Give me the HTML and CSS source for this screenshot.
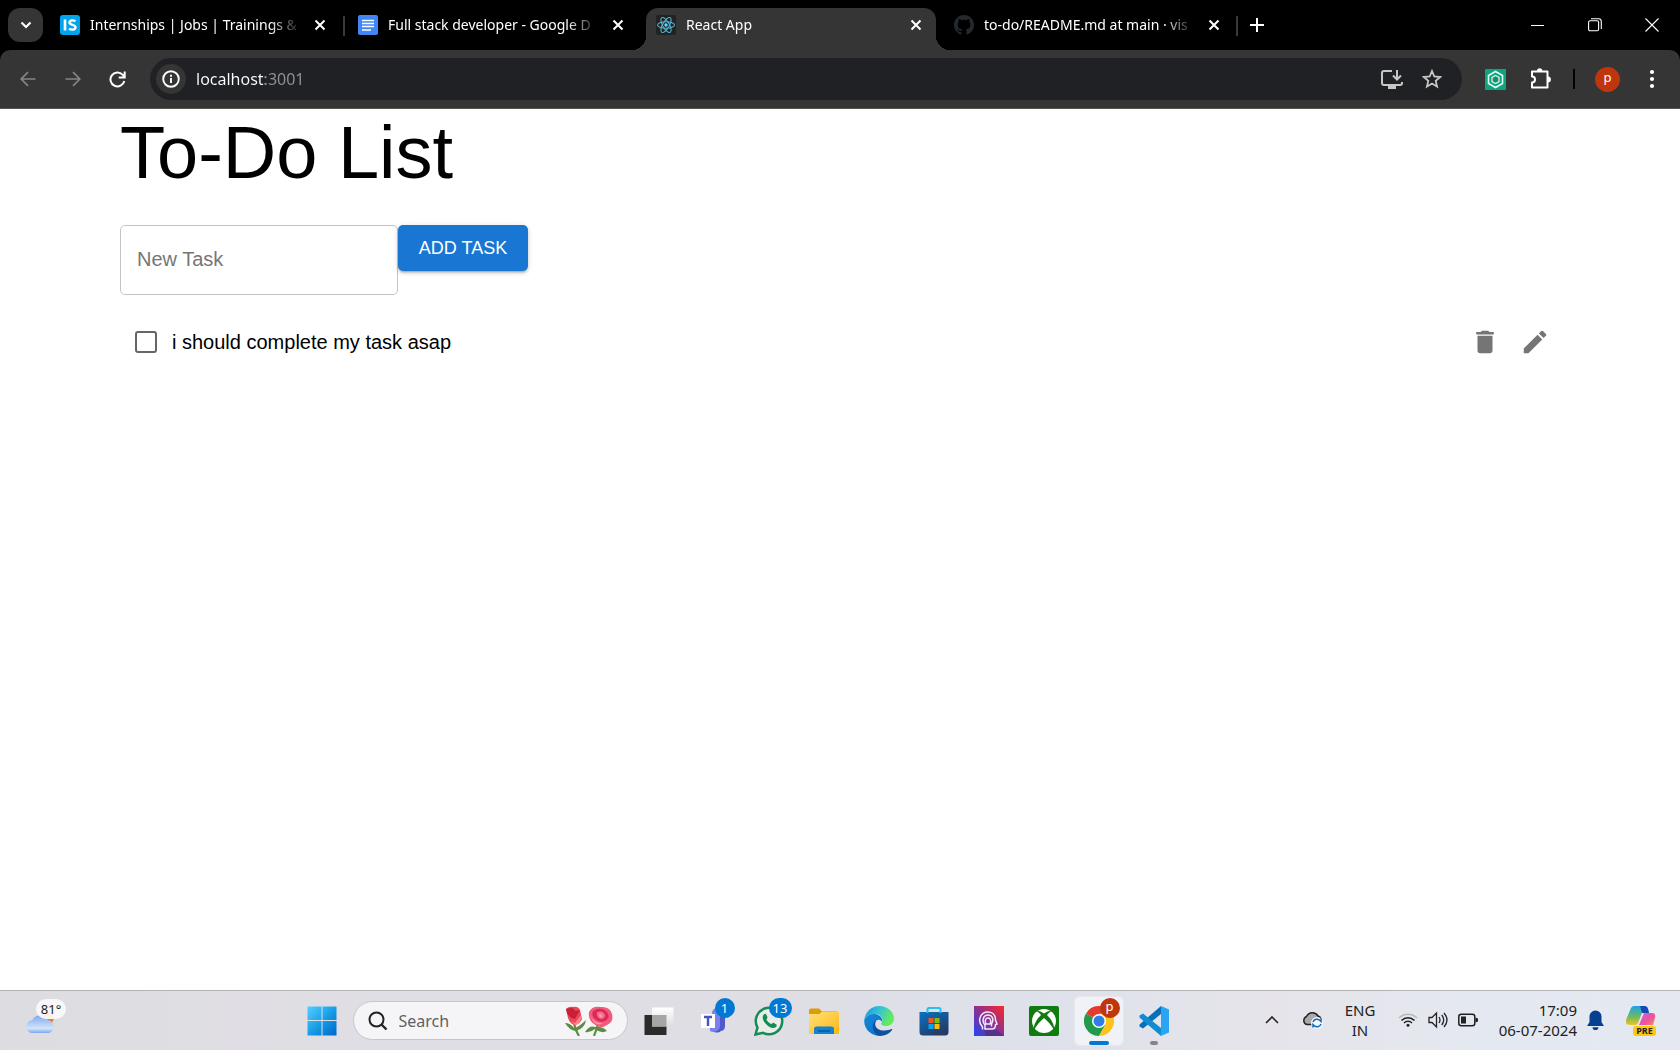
FILE: index.html
```html
<!DOCTYPE html>
<html lang="en">
<head>
<meta charset="utf-8">
<meta name="viewport" content="width=device-width, initial-scale=1">
<title>React App</title>
<link rel="stylesheet" href="styles.css">
</head>
<body>
<header class="browser">
  <div class="tabstrip">
    <button class="tab-search" aria-label="Search tabs"><svg width="12" height="8" viewBox="0 0 12 8"><path d="M1.5 1.5 6 6l4.500-4.500" fill="none" stroke="#fff" stroke-width="2.200"/></svg></button>
    <div class="tabs">
      <div class="tab">
        <svg width="20" height="20" viewBox="0 0 20 20"><rect width="20" height="20" rx="3" fill="#00a5ec"/><path d="M5 4.500v11" stroke="#fff" stroke-width="2.600"/><path d="M15.500 6.200c-2.500-1.500-6-.9-6 1.400 0 3 6 1.700 6 4.700 0 2.600-4 3-6.500 1.400" fill="none" stroke="#fff" stroke-width="2.400"/></svg>
        <span class="tab-title">Internships | Jobs | Trainings &amp; F</span>
        <button class="tab-close" aria-label="Close tab"><svg width="12" height="12" viewBox="0 0 12 12"><path d="m1.500 1.500 9 9m0-9-9 9" stroke="#fff" stroke-width="2"/></svg></button>
      </div>
      <div class="tab divided">
        <svg width="20" height="20" viewBox="0 0 20 20"><rect width="20" height="20" rx="2" fill="#4285f4"/><path d="M4 5.500h12M4 8.500h12M4 11.500h12M4 15h9" stroke="#fff" stroke-width="1.700"/></svg>
        <span class="tab-title">Full stack developer - Google D</span>
        <button class="tab-close" aria-label="Close tab"><svg width="12" height="12" viewBox="0 0 12 12"><path d="m1.500 1.500 9 9m0-9-9 9" stroke="#fff" stroke-width="2"/></svg></button>
      </div>
      <div class="tab active">
        <svg width="20" height="20" viewBox="0 0 20 20"><rect width="20" height="20" rx="2" fill="#222"/><g fill="none" stroke="#53b5d0" stroke-width="1.100"><ellipse cx="10" cy="10" rx="8.500" ry="3.300"/><ellipse cx="10" cy="10" rx="8.500" ry="3.300" transform="rotate(60 10 10)"/><ellipse cx="10" cy="10" rx="8.500" ry="3.300" transform="rotate(120 10 10)"/></g><circle cx="10" cy="10" r="1.700" fill="#61dafb"/></svg>
        <span class="tab-title">React App</span>
        <button class="tab-close" aria-label="Close tab"><svg width="12" height="12" viewBox="0 0 12 12"><path d="m1.500 1.500 9 9m0-9-9 9" stroke="#fff" stroke-width="2"/></svg></button>
      </div>
      <div class="tab">
        <svg width="20" height="20" viewBox="0 0 16 16"><path fill="#24292f" d="M8 0C3.580 0 0 3.580 0 8c0 3.540 2.290 6.530 5.470 7.590.4.070.55-.17.55-.38 0-.19-.01-.82-.01-1.490-2.010.37-2.530-.49-2.690-.94-.09-.23-.48-.94-.82-1.130-.28-.15-.68-.52-.01-.53.63-.01 1.080.58 1.230.82.720 1.210 1.870.87 2.330.66.070-.52.28-.87.510-1.070-1.780-.2-3.640-.89-3.640-3.950 0-.87.310-1.590.82-2.150-.08-.2-.36-1.020.08-2.120 0 0 .67-.21 2.200.82a7.600 7.600 0 0 1 4 0c1.530-1.040 2.200-.82 2.200-.82.440 1.100.16 1.920.08 2.120.51.560.82 1.270.82 2.150 0 3.070-1.870 3.750-3.650 3.950.29.250.54.730.54 1.480 0 1.070-.01 1.930-.01 2.200 0 .21.15.460.55.380A8 8 0 0 0 8 0"/></svg>
        <span class="tab-title">to-do/README.md at main · vis</span>
        <button class="tab-close" aria-label="Close tab"><svg width="12" height="12" viewBox="0 0 12 12"><path d="m1.500 1.500 9 9m0-9-9 9" stroke="#fff" stroke-width="2"/></svg></button>
      </div>
      <button class="new-tab" aria-label="New tab"><svg width="14" height="14" viewBox="0 0 14 14"><path d="M7 0v14M0 7h14" stroke="#fff" stroke-width="2"/></svg></button>
    </div>
    <div class="window-controls">
      <button aria-label="Minimize"><svg width="14" height="14" viewBox="0 0 14 14"><path d="M0 7.500h13" stroke="#fff"/></svg></button>
      <button aria-label="Restore"><svg width="14" height="14" viewBox="0 0 14 14" fill="none" stroke="#fff" stroke-width="1.100"><rect x=".6" y="2.800" width="10" height="10" rx="1.500"/><path d="M3 .7h7.500a2.800 2.800 0 0 1 2.800 2.800V11"/></svg></button>
      <button aria-label="Close"><svg width="14" height="14" viewBox="0 0 14 14"><path d="m.5.5 13 13m0-13-13 13" stroke="#fff" stroke-width="1.100"/></svg></button>
    </div>
  </div>
  <div class="toolbar">
    <nav class="history">
      <button aria-label="Back"><svg width="16" height="16" viewBox="0 0 16 16" fill="none" stroke="#848484" stroke-width="1.700"><path d="M15.500 8H1.500M8 1.200 1.200 8 8 14.800"/></svg></button>
      <button aria-label="Forward"><svg width="16" height="16" viewBox="0 0 16 16" fill="none" stroke="#848484" stroke-width="1.700"><path d="M.5 8h14M8 1.200 14.800 8 8 14.800"/></svg></button>
      <button aria-label="Reload"><svg width="17" height="17" viewBox="0 0 17 17" fill="none" stroke="#fff" stroke-width="2"><path d="M15.300 10A7 7 0 1 1 13.600 3.600L15.500 6M15.700.5V6.500H9.700"/></svg></button>
    </nav>
    <div class="omnibox">
      <button class="site-info" aria-label="View site information"><svg width="18" height="18" viewBox="0 0 18 18"><circle cx="9" cy="9" r="7.800" fill="none" stroke="#fff" stroke-width="1.900"/><path d="M9 8v5M9 4.700v2" stroke="#fff" stroke-width="1.900"/></svg></button>
      <input class="address" type="text" value="localhost:3001" aria-label="Address bar">
      <button class="omni-action" aria-label="Install app"><svg width="22" height="20" viewBox="0 0 22 20" fill="none" stroke="#c7c7c7" stroke-width="2"><path d="M11 2H3a2 2 0 0 0-2 2v10a2 2 0 0 0 2 2h16a2 2 0 0 0 2-2v-1M16 1v9M12 6.500l4 4 4-4"/><path d="M7 17h8v3H7z" fill="#c7c7c7" stroke="none"/></svg></button>
      <button class="omni-action" aria-label="Bookmark this tab"><svg width="20" height="20" viewBox="0 0 20 20"><path d="m10 2 2.300 5.500 5.900.5-4.500 3.900 1.400 5.800L10 14.600l-5.100 3.100 1.400-5.800L1.800 8l5.900-.5z" fill="none" stroke="#c7c7c7" stroke-width="1.800"/></svg></button>
    </div>
    <div class="extensions">
      <button aria-label="Extension"><svg width="21" height="21" viewBox="0 0 21 21"><rect width="21" height="21" rx="1" fill="#10a37f"/><path d="m10.500 2.500 7 4v8l-7 4-7-4v-8z" fill="none" stroke="#e6fff7" stroke-width="1.600"/><path d="m10.500 6.500 3.500 2v4l-3.500 2-3.500-2v-4z" fill="#188b70" stroke="#d4f5eb" stroke-width="1.300"/></svg></button>
      <button aria-label="Extensions"><svg width="22" height="22" viewBox="0 0 22 22"><path d="M2 3.500h15.500v16H2v-5a3 3 0 0 0 0-6z" fill="none" stroke="#fff" stroke-width="2" stroke-linejoin="round"/><path d="M7 3a2.700 2.700 0 0 1 5.400 0zM18 8.500a2.900 2.900 0 0 1 0 5.800z" fill="#fff"/></svg></button>
      <span class="rule"></span>
      <button class="avatar" aria-label="Profile">p</button>
      <button aria-label="Menu"><svg width="6" height="20" viewBox="0 0 6 20" fill="#fff"><circle cx="3" cy="3" r="2.100"/><circle cx="3" cy="10" r="2.100"/><circle cx="3" cy="17" r="2.100"/></svg></button>
    </div>
  </div>
</header>

<main class="page">
  <h1 class="title">To-Do List</h1>
  <form class="task-form">
    <input class="task-input" type="text" placeholder="New Task" aria-label="New Task">
    <button class="add-button" type="button">ADD TASK</button>
  </form>
  <ul class="task-list">
    <li class="task">
      <input class="task-check" type="checkbox" id="task-1">
      <label class="task-label" for="task-1">i should complete my task asap</label>
      <button class="icon-button" aria-label="Delete"><svg width="30" height="30" viewBox="0 0 24 24"><path fill="#757575" d="M6 19c0 1.100.9 2 2 2h8c1.100 0 2-.9 2-2V7H6zM19 4h-3.500l-1-1h-5l-1 1H5v2h14z"/></svg></button>
      <button class="icon-button" aria-label="Edit"><svg width="30" height="30" viewBox="0 0 24 24"><path fill="#757575" d="M3 17.250V21h3.750L17.810 9.940l-3.750-3.750zM20.710 7.040a1 1 0 0 0 0-1.410l-2.340-2.340a1 1 0 0 0-1.410 0l-1.830 1.830 3.750 3.750z"/></svg></button>
    </li>
  </ul>
</main>

<footer class="taskbar">
  <div class="widgets">
    <button class="weather" aria-label="Weather">
      <svg width="30" height="22" viewBox="0 0 30 22"><defs><linearGradient id="cloud" x2="0" y2="1"><stop stop-color="#7ea9ef"/><stop offset=".75" stop-color="#d3e5fa"/><stop offset="1" stop-color="#78a5ee"/></linearGradient></defs><circle cx="22" cy="6" r="6" fill="#f27a25"/><path d="M7 21a6.500 6.500 0 0 1-.8-13A9 9 0 0 1 22 8a6.700 6.700 0 0 1 1 13z" fill="url(#cloud)"/></svg>
      <span class="temperature">81°</span>
    </button>
  </div>
  <div class="apps">
    <button class="app" aria-label="Start"><svg width="30" height="30" viewBox="0 0 30 30"><defs><linearGradient id="win" x2="1" y2="1"><stop stop-color="#53d0ff"/><stop offset=".55" stop-color="#1499e4"/><stop offset="1" stop-color="#0067c8"/></linearGradient></defs><path d="M1 .5h13.500V14H.5V1zM15.500.5h14V14h-14zM.5 15h14v14.500H.5zM15.500 15h14v14.500h-14z" fill="url(#win)"/></svg></button>
    <div class="search">
      <svg width="20" height="20" viewBox="0 0 20 20"><circle cx="8.500" cy="8.500" r="7" fill="none" stroke="#222" stroke-width="2"/><path d="m13.500 13.500 5 5" stroke="#222" stroke-width="2.400"/></svg>
      <input type="text" placeholder="Search" aria-label="Search">
      <svg width="50" height="30" viewBox="0 0 50 30"><path d="M10 17q1 7 5 13M34 18q-2 7-4 12" stroke="#5b9140" stroke-width="2.200" fill="none"/><path d="M1 17q5 0 9 5 5-1 12-8-1 8-10 11-7-1-11-8M21 26q5-7 10-5 7-1 12 4-6 3-12-2-5 4-10 3" fill="#5d8c47"/><path d="M2 3q3-3 7-2 5-1 7 3l2 9q-2 5-7 6-5-1-7-7z" fill="#ed4659"/><path d="M2 3q8-3 9 2l5-1-5 9q-6-1-8-6z" fill="#c91f3b"/><path d="m7 14 4 3 6-8q1 8-6 10z" fill="#ff8489"/><path d="M25 6q3-6 11-5 10-1 12 7 2 8-5 11-7 5-13-1-6-4-5-12" fill="#f15b7b"/><path d="M29 5q8-5 14 1 4 6-2 9-6 2-10-2-4-3-2-8" fill="#df2857"/><path d="M33 6q6-2 8 3 0 4-4 4-5-1-4-7" fill="#f4708c"/><path d="M35 8q4 0 3 3-3 1-3-3M26 9q4 9 13 8-8 5-13-8" fill="#ff9dac"/></svg>
    </div>
    <button class="app" aria-label="Task view"><svg width="30" height="30" viewBox="0 0 30 30"><defs><linearGradient id="pane" x2="0" y2="1"><stop stop-color="#fff"/><stop offset="1" stop-color="#ddd"/></linearGradient></defs><path d="M.5 9h22v20H.5z" fill="#2b2b2b"/><path d="M8 1.500h21.500v19H8z" fill="url(#pane)"/><path d="M8 9h14.500v11.500H8z" fill="#a6a6a6"/></svg></button>
    <button class="app" aria-label="Teams"><svg width="30" height="30" viewBox="0 0 30 30"><circle cx="18" cy="7" r="5" fill="#7b83eb"/><path d="M13 10h13v10a5 5 0 0 1-4 5 7 7 0 0 1-11-3z" fill="#5059c9"/><path d="M10 10h11v11a7 7 0 0 1-10 4z" fill="#7b83eb"/><rect x="2" y="8" width="14" height="14" fill="#fff"/><path d="M5 11h8M9 11v9" stroke="#4b53bc" stroke-width="2.400"/></svg><span class="badge">1</span></button>
    <button class="app" aria-label="WhatsApp"><svg width="30" height="30" viewBox="0 0 30 30"><path d="M1.500 28.500 3.500 21.500A13.200 13.200 0 1 1 9 26.800z" fill="#e8edea" stroke="#168c54" stroke-width="2.500"/><path d="M10.500 8c-3 2-2 6 1 9.500s7.500 6 10.500 3.500c1-1 1-2 0-2.700l-2.500-1.500c-1-.5-1.500 1.500-2.500 1.200-2-1-4-3-4.500-4.500 0-1 1.400-1.300 1-2.300L12.300 8.500c-.3-.8-1-.9-1.800-.5" fill="#168c54"/></svg><span class="badge wide">13</span></button>
    <button class="app" aria-label="File Explorer"><svg width="30" height="30" viewBox="0 0 30 30"><defs><linearGradient id="folder" x2="1" y2="1"><stop stop-color="#ffe07a"/><stop offset="1" stop-color="#fdb813"/></linearGradient></defs><path d="M0 4.500A2 2 0 0 1 2 2.500h8l3 3H28v8H0z" fill="#dc9c08"/><path d="M0 8h10l3-2h17v22H0z" fill="url(#folder)"/><path d="M5 28v-5a2.500 2.500 0 0 1 2.500-2.500h15A2.500 2.500 0 0 1 25 23v5z" fill="#1482d3"/><path d="M9 25h12" stroke="#064d88" stroke-width="1.200"/></svg></button>
    <button class="app" aria-label="Edge"><svg width="30" height="30" viewBox="0 0 30 30"><defs><linearGradient id="edge-top" x2="1" y2=".4"><stop stop-color="#1b8dde"/><stop offset=".5" stop-color="#33c3d8"/><stop offset="1" stop-color="#65eb5a"/></linearGradient><linearGradient id="edge-low" x2=".7" y2="1"><stop stop-color="#1689d8"/><stop offset="1" stop-color="#0873ca"/></linearGradient></defs><path d="M.3 13A15 15 0 0 1 15 0c9 0 15 6 15 12.500 0 5-4 7.500-8 7.500-4.500 0-5.500-2-4.300-3.500C20 13 17 8 11 8 6 8 1.500 10.500.3 13" fill="url(#edge-top)"/><path d="M.2 14C2 9.500 7 7.500 11 8c5 .5 8 4.500 7 7.500-4-4-8 0-8 4 0 5 4 9 8 10A15 15 0 0 1 .2 14" fill="url(#edge-low)"/><path d="M12.500 14C9 20 13 24 19 24.500c4 .3 7-1 8.500-1.500 1 0 .8.700.4 1.300C25 28 21 30 16 30 9 28 6 18 12.500 14" fill="#10519e"/></svg></button>
    <button class="app" aria-label="Microsoft Store"><svg width="30" height="30" viewBox="0 0 30 30"><defs><linearGradient id="store" x2=".6" y2="1"><stop stop-color="#0872c4"/><stop offset="1" stop-color="#253b64"/></linearGradient></defs><path d="M.5 6h29v20a3.500 3.500 0 0 1-3.500 3.500H4A3.500 3.500 0 0 1 .5 26z" fill="url(#store)"/><path d="M8.500 7V3.500a1.500 1.500 0 0 1 1.500-1.500h10a1.500 1.500 0 0 1 1.500 1.500V7" fill="none" stroke="#2cbdef" stroke-width="2"/><path d="M9.500 12h5v5h-5z" fill="#f35325"/><path d="M15.500 12h5v5h-5z" fill="#81bc06"/><path d="M9.500 18h5v5h-5z" fill="#05a6f0"/><path d="M15.500 18h5v5h-5z" fill="#ffba08"/></svg></button>
    <button class="app" aria-label="Mind app"><svg width="30" height="30" viewBox="0 0 30 30"><defs><linearGradient id="mind" y1="1" x2="1" y2="0"><stop stop-color="#2146f5"/><stop offset=".5" stop-color="#8c318f"/><stop offset="1" stop-color="#ff2626"/></linearGradient></defs><path d="M0 0h30v30H0z" fill="url(#mind)"/><path d="m10 24 13 0 7 6H12z" fill="#533287"/><path d="M8.500 23.500v-2.500C3 15 6 6 14 6c5 0 7.500 3.500 7.500 8l1.500 4-1.500.5c0 3.500-1 4.500-3.500 4.500h-7v-4C7.500 15.500 9 9 14 9c5 0 6 5.500 3.500 9v2.500M12 18c-1.500-3-.5-6 2-6s3.500 3 2 6z" fill="none" stroke="#f2e8ff" stroke-width="1.500"/></svg></button>
    <button class="app" aria-label="Xbox"><svg width="30" height="30" viewBox="0 0 30 30"><rect width="30" height="30" rx="2" fill="#107c10"/><circle cx="15" cy="15" r="12" fill="#fff"/><path d="M6 5c3-1 6 .5 9 2.500 3-2 6-3.500 9-2.500-2 0-4 1.500-6 4 4 4 8 10 7 15-2-4-6-8.500-10-12-4 3.500-8 8-10 12-1-5 3-11 7-15-2-2.500-4-4-6-4" fill="#107c10"/></svg></button>
    <button class="app current" aria-label="Chrome"><svg width="30" height="30" viewBox="0 0 30 30"><path d="M15 15 2 7.500a15 15 0 0 1 26 0z" fill="#e33b2e"/><path d="M15 15 2 7.500A15 15 0 0 0 15 30l6.500-11.500z" fill="#229a4b"/><path d="M15 30A15 15 0 0 0 28 7.500H15l6.500 11z" fill="#fcc31b"/><circle cx="15" cy="15" r="7" fill="#fff"/><circle cx="15" cy="15" r="5.500" fill="#2f7de9"/></svg><span class="badge profile">p</span></button>
    <button class="app open" aria-label="Visual Studio Code"><svg width="30" height="30" viewBox="0 0 30 30"><path d="m22 0 8 3.500v23L22 30z" fill="#2aa5f2"/><path d="M22 0v8L4 22.500.5 20.500v-2z" fill="#0870b8"/><path d="M22 30v-8L4 7.500.5 9.500v2z" fill="#118bd4"/></svg></button>
  </div>
  <div class="tray">
    <button aria-label="Show hidden icons"><svg width="14" height="8" viewBox="0 0 14 8"><path d="m1 7 6-6 6 6" fill="none" stroke="#222" stroke-width="1.600"/></svg></button>
    <button class="onedrive" aria-label="OneDrive"><svg width="21" height="19" viewBox="0 0 21 19"><path d="M5 14.500a4.200 4.200 0 0 1-.5-8A6.500 6.500 0 0 1 16 6a4.500 4.500 0 0 1 0 8.500z" fill="#aaa" stroke="#222" stroke-width="1.500"/><circle cx="15" cy="13" r="6" fill="#f5f8fd"/><path d="M11 12a4.200 4.200 0 0 1 7-1.500l1 1V8.500M19 14a4.200 4.200 0 0 1-7 1.500l-1-1v3" fill="none" stroke="#0b6cbe" stroke-width="1.500"/></svg></button>
    <button class="language">ENG<br>IN</button>
    <button class="status" aria-label="Network, volume and battery">
      <svg width="20" height="16" viewBox="0 0 20 16" fill="none" stroke="#222" stroke-width="1.500"><path d="M1 6a12.500 12.500 0 0 1 18 0" stroke="#b7b9be"/><path d="M3.500 8.500a9 9 0 0 1 13 0M6 11a5.600 5.600 0 0 1 8 0"/><circle cx="10" cy="13.300" r="1.500" fill="#222" stroke="none"/></svg>
      <svg width="20" height="18" viewBox="0 0 20 18" fill="none" stroke="#222" stroke-width="1.300"><path d="M1 6.500h3L8.500 2v14L4 11.500H1zM11 6q2 3 0 6M13.700 4q4 5 0 10M16 2q6 7 0 14"/></svg>
      <svg width="20" height="14" viewBox="0 0 20 14"><rect x=".8" y="1.300" width="16" height="11.400" rx="2.500" fill="none" stroke="#222" stroke-width="1.500"/><path d="M3 3.500h5v7H3zM17.500 4.500l2.500 1v3l-2.500 1z" fill="#222"/></svg>
    </button>
    <button class="clock"><span>17:09</span><span>06-07-2024</span></button>
    <button class="bell" aria-label="Notifications"><svg width="17" height="20" viewBox="0 0 17 20"><path d="M8.500.5A6 6 0 0 1 14.500 7v5l2.200 3.500v.5H.3v-.5L2.500 12V7a6 6 0 0 1 6-6.500M5.500 17.200h6a3 3 0 0 1-6 0" fill="#073f91"/></svg></button>
    <button class="copilot" aria-label="Copilot"><svg width="30" height="30" viewBox="0 0 30 30"><defs><linearGradient id="cop-left" x2="0" y2="1"><stop stop-color="#18a5e7"/><stop offset=".6" stop-color="#76ba58"/><stop offset="1" stop-color="#f2c320"/></linearGradient><linearGradient id="cop-right" x2="1" y2="1"><stop stop-color="#cc59e5"/><stop offset=".6" stop-color="#ed5594"/><stop offset="1" stop-color="#f7905b"/></linearGradient></defs><path d="M8 1h10a4 4 0 0 1 4 3l1 4h-7l-4 10q-1 2-3 2H4q-5 0-4-5L5 3q1-2 3-2" fill="url(#cop-left)"/><path d="M14 1h4a4 4 0 0 1 4 3l1 4h-7z" fill="#1649b9"/><path d="M18 8h8q4 0 3 5l-2 7H13z" fill="url(#cop-right)"/></svg><span class="pre">PRE</span></button>
  </div>
</footer>
</body>
</html>
```
FILE: styles.css
```css
* { box-sizing: border-box; }

body {
  margin: 0;
  min-height: 100vh;
  display: flex;
  flex-direction: column;
  background: #fff;
  font-family: "Liberation Sans", Arial, sans-serif;
}

button, input { font: inherit; color: inherit; }

button {
  display: flex;
  align-items: center;
  justify-content: center;
  padding: 0;
  border: 0;
  background: none;
}

svg { display: block; flex: none; }

/* Browser window */
.browser {
  background: #000;
  color: #fff;
  font-family: "Noto Sans", "Open Sans", sans-serif;
}

.tabstrip { display: flex; height: 50px; }

.tab-search {
  width: 35px;
  height: 34px;
  margin: 8px 7px 0 8px;
  border-radius: 12px;
  background: #353535;
}

.tabs { display: flex; flex: 1; gap: 8px; min-width: 0; padding-top: 8px; }

.tab {
  position: relative;
  display: flex;
  align-items: center;
  flex: 0 1 290px;
  min-width: 0;
  padding: 0 13px 8px 10px;
  border-radius: 12px 12px 0 0;
  font-size: 14px;
}

.tab.divided::before,
.tab:nth-last-child(2)::after {
  content: "";
  position: absolute;
  top: 8px;
  left: -5px;
  width: 2px;
  height: 20px;
  background: #3a3a3a;
}

.tab:nth-last-child(2)::after { left: auto; right: -4px; }

.tab.active { background: #353535; }

.tab.active::before,
.tab.active::after {
  content: "";
  position: absolute;
  bottom: 0;
  width: 14px;
  height: 14px;
}

.tab.active::before { right: 100%; background: radial-gradient(circle at 0 0, #000 14px, #353535 14px); }
.tab.active::after { left: 100%; background: radial-gradient(circle at 100% 0, #000 14px, #353535 14px); }

.tab-title {
  flex: 1;
  min-width: 0;
  margin: 0 12px 0 10px;
  overflow: hidden;
  white-space: nowrap;
  line-height: 20px;
  mask-image: linear-gradient(to right, #000 calc(100% - 32px), transparent);
}

.tab-close { width: 14px; height: 20px; }

.new-tab { width: 30px; height: 34px; }

.window-controls { display: flex; }
.window-controls button { width: 57px; }

.toolbar {
  display: flex;
  align-items: center;
  height: 59px;
  padding-left: 5px;
  border-radius: 10px 10px 0 0;
  border-bottom: 1px solid #555;
  background: #353535;
}

.history { display: flex; margin-right: 10px; }
.history button { width: 45px; height: 40px; }

.omnibox {
  display: flex;
  align-items: center;
  flex: 1;
  height: 42px;
  padding: 0 19px 0 6px;
  border-radius: 21px;
  background: #202124;
}

.site-info {
  width: 30px;
  height: 30px;
  border-radius: 50%;
  background: #353535;
}

.address {
  flex: 1;
  min-width: 0;
  height: 30px;
  padding: 0;
  margin-left: 10px;
  border: 0;
  outline: 0;
  font-size: 16px;
  background: linear-gradient(to right, #fff 69px, #919396 69px);
  background-clip: text;
  -webkit-text-fill-color: transparent;
}

.omni-action { width: 22px; height: 30px; margin-left: 18px; }

.extensions { display: flex; align-items: center; padding-left: 21px; padding-right: 16px; }
.extensions button { width: 24px; height: 30px; margin-right: 22px; }
.extensions button:last-child { margin-right: 0; }
.rule { width: 2px; height: 20px; margin: 0 20px 0 -2px; background: #000; }

.extensions .avatar {
  width: 25px;
  height: 25px;
  margin-right: 20px;
  border-radius: 50%;
  background: #bf360c;
  font-size: 13px;
  line-height: 20px;
  padding-bottom: 4px;
}

/* To-do page */
.page { flex: 1; padding: 0 120px; }

.title {
  margin: 0;
  font-size: 74px;
  font-weight: 400;
  line-height: 88px;
}

.task-form { display: flex; align-items: flex-start; margin: 28px 0 20px; }

.task-input {
  width: 278px;
  height: 70px;
  padding: 0 16px 2px;
  border: 1px solid #c4c4c4;
  border-radius: 5px;
  font-size: 20px;
}

.task-input::placeholder { color: #767676; opacity: 1; }

.add-button {
  width: 130px;
  height: 46px;
  border-radius: 5px;
  background: #1976d2;
  box-shadow: 0 3px 2px -2px rgba(0, 0, 0, .2), 0 2px 3px rgba(0, 0, 0, .14), 0 1px 6px rgba(0, 0, 0, .12);
  color: #fff;
  font-size: 18px;
}

.task-list { margin: 0; padding: 0 0 0 15px; list-style: none; }

.task { display: flex; align-items: center; height: 54px; }

.task-check {
  appearance: none;
  width: 22px;
  height: 22px;
  margin: 0 15px 0 0;
  border: 2px solid #666;
  border-radius: 3px;
}

.task-label { flex: 1; font-size: 20px; line-height: 30px; }

.icon-button { width: 50px; height: 50px; }

/* Desktop taskbar */
.taskbar {
  display: flex;
  height: 60px;
  border-top: 1px solid #b3b2b7;
  background: linear-gradient(to right, #dddde1, #e0dee4 20%, #dedee4 45%, #dfe2eb 65%, #e6e4ea 75%, #e4e9f1 90%, #e5e8f0);
  color: #222;
  font-family: "Noto Sans", "Open Sans", sans-serif;
}

.widgets { width: 226px; padding: 7px 0 0 26px; }

.weather { position: relative; width: 40px; height: 40px; align-items: flex-end; justify-content: flex-start; padding-bottom: 4px; }

.temperature {
  position: absolute;
  top: 1px;
  left: 10px;
  width: 30px;
  height: 20px;
  border-radius: 10px;
  background: rgba(250, 250, 250, .93);
  font-size: 13px;
  line-height: 20px;
}

.apps { display: flex; flex: 1; align-items: center; justify-content: center; gap: 7px; }

.app { position: relative; width: 48px; height: 48px; border-radius: 5px; }
.app.current { background: #f1f2f7; box-shadow: 0 0 0 1px #e7e8ee; }

.app.current::after,
.app.open::after {
  content: "";
  position: absolute;
  bottom: 0;
  left: 14px;
  width: 20px;
  height: 4px;
  border-radius: 2px;
  background: #0078d4;
}

.app.open::after { left: 20px; width: 8px; background: #858589; }

.badge {
  position: absolute;
  top: 1px;
  right: 3px;
  width: 20px;
  height: 20px;
  border-radius: 10px;
  background: #0078d4;
  color: #fff;
  font-size: 13px;
  line-height: 20px;
}

.badge.wide { right: 1px; width: 23px; }
.badge.profile { background: #bf360c; line-height: 17px; }

.search {
  display: flex;
  align-items: center;
  width: 275px;
  height: 39px;
  padding: 0 13px 0 14px;
  border: 1px solid #c6c6cb;
  border-radius: 20px;
  background: #f5f5f7;
}

.search input {
  flex: 1;
  min-width: 0;
  margin-left: 11px;
  padding: 0;
  border: 0;
  outline: 0;
  background: none;
  font-size: 16px;
}

.search input::placeholder { color: #606063; opacity: 1; }

.tray { display: flex; align-items: center; padding-right: 24px; font-size: 15px; line-height: 20px; }
.tray button { height: 44px; padding-bottom: 2px; }
.tray button:first-child { width: 46px; }
.tray .onedrive { width: 34px; }
.tray .language { width: 62px; }
.tray .status { gap: 10px; width: 94px; }
.tray .clock { flex-direction: column; align-items: flex-end; width: 92px; }
.tray .bell { width: 37px; }
.tray .copilot { position: relative; width: 31px; margin-left: 11px; }

.pre {
  position: absolute;
  right: 0;
  bottom: 7px;
  width: 23px;
  border-radius: 3px;
  background: #fbc814;
  font-size: 9px;
  font-weight: 700;
  line-height: 10px;
}
```
